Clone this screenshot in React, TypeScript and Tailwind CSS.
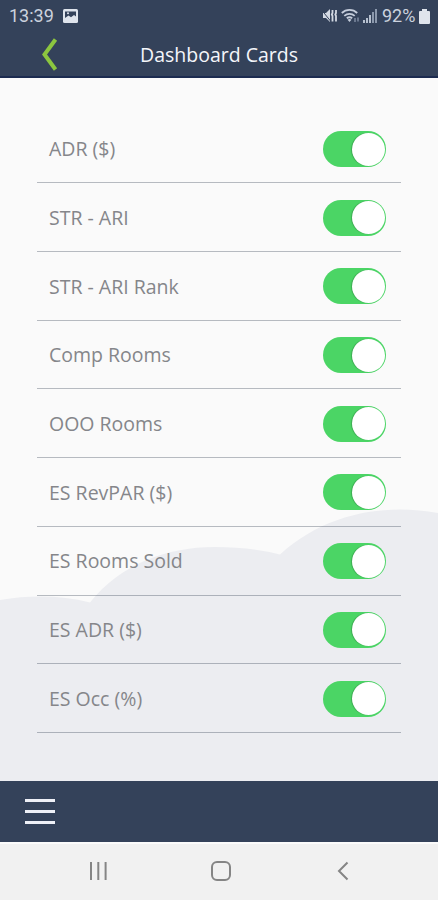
import { useState } from 'react'

const CARDS = [
  'ADR ($)',
  'STR - ARI',
  'STR - ARI Rank',
  'Comp Rooms',
  'OOO Rooms',
  'ES RevPAR ($)',
  'ES Rooms Sold',
  'ES ADR ($)',
  'ES Occ (%)',
]

function StatusBar() {
  return (
    <div className="h-8 flex items-center justify-between pl-[9px] pr-[8px] text-[#cbd2de] font-[Roboto,sans-serif] text-[18px] leading-none">
      <div className="flex items-center gap-[8px]">
        <span className="w-[46px] whitespace-nowrap">13:39</span>
        <svg width="15" height="14" viewBox="0 0 15 14">
          <rect width="15" height="14" rx="1.5" fill="#dfe4ec" />
          <path d="M2 2.5h11v5l-2-1.5-3 2.2-2.5-1.7L2 9z" fill="#34425a" />
          <circle cx="5" cy="4.3" r="1" fill="#dfe4ec" />
        </svg>
      </div>
      <div className="flex items-center">
        <svg width="16" height="16" viewBox="0 0 16 16" fill="none">
          <path d="M1 5h3l4-4v13l-4-4H1z" fill="#d3d9e3" />
          <path d="M0 2.5 8.5 13" stroke="#34425a" strokeWidth="1" />
          <path d="M10.5 2v3l-.7 1.5.7 1.5v5.5M14 2v3l-.7 1.5.7 1.5v5.5" stroke="#d3d9e3" strokeWidth="1.8" />
        </svg>
        <svg className="ml-[3px]" width="20" height="16" viewBox="0 0 20 16" fill="none" stroke="#c5cddb" strokeWidth="1.8">
          <path d="M.8 5C5 .8 12 .8 16.2 5M3.3 7.8c3-2.7 7.4-2.7 10.4 0M5.8 10.3c1.6-1.3 3.8-1.3 5.4 0" />
          <path d="m8.5 14-2-2.3c1.2-1 2.8-1 4 0z" fill="#c5cddb" stroke="none" />
          <path d="M14 10v4M17 9.5v4" stroke="#7d8ba1" strokeWidth="1.5" />
        </svg>
        <svg className="ml-[2px]" width="14" height="14" viewBox="0 0 14 14" fill="#b6c0cf">
          <path d="M0 11h2v3H0zM3 9h2v5H3zM6 6h2v8H6z" />
          <path d="M9 3h2v11H9zM12 0h2v14h-2z" fill="#8c99ad" />
        </svg>
        <span className="ml-[5px] w-[37px] whitespace-nowrap">92%</span>
        <svg width="11" height="15" viewBox="0 0 11 15" fill="#dfe4ec">
          <path d="M3 0h5v2h2a1 1 0 0 1 1 1v11a1 1 0 0 1-1 1H1a1 1 0 0 1-1-1V3a1 1 0 0 1 1-1h2z" />
        </svg>
      </div>
    </div>
  )
}

function Toggle({ on, label, onChange }: { on: boolean; label: string; onChange: () => void }) {
  return (
    <button
      role="switch"
      aria-checked={on}
      aria-label={label}
      onClick={onChange}
      className={`w-[63px] h-9 rounded-full p-px flex items-center ${on ? 'bg-[#4bd565] justify-end' : 'bg-gray-300 justify-start'}`}
    >
      <span className="size-[33px] rounded-full bg-white shadow-[-1px_0px_1px_rgba(0,0,0,0.2)]" />
    </button>
  )
}

export default function App() {
  const [off, setOff] = useState<string[]>([])

  function toggle(card: string) {
    setOff(o => (o.includes(card) ? o.filter(c => c !== card) : [...o, card]))
  }

  return (
    <div className="w-[438px] h-[900px] flex flex-col overflow-hidden bg-[#fafafa] font-['Open_Sans',sans-serif]">
      <header className="h-[78px] shrink-0 bg-[#34425a] border-b-2 border-[#1c2b50]">
        <StatusBar />
        <div className="h-11 grid grid-cols-[70px_1fr_70px] items-center">
          <button aria-label="Back" className="pl-[41px]">
            <svg width="17" height="33" viewBox="0 0 17 33" fill="none" stroke="#8cc63f" strokeWidth="4">
              <path d="M14.5 1.5 3.5 16.5l11 15" />
            </svg>
          </button>
          <h1 className="pt-px text-center text-[19.5px] leading-none text-[#f4f6fa]">Dashboard Cards</h1>
        </div>
      </header>

      <main className="relative flex-1 px-[37px] pt-[36.7px]">
        {/* cloud backdrop */}
        <svg className="absolute inset-0" width="438" height="703" viewBox="0 78 438 703">
          <path d="M0 600Q48 592 90 602.5C120 565 165 547 215 547Q250 547 280 554.5C325 513 385 503 438 513V781H0z" fill="#ecedf1" />
        </svg>
        <ul className="relative">
          {CARDS.map(card => (
            <li key={card} className="h-[68.7px] pt-px pl-3 pr-[15px] flex items-center justify-between border-b border-[#364152]/35">
              <span className="text-[19.5px] leading-none text-[#85868a]">{card}</span>
              <Toggle on={!off.includes(card)} label={card} onChange={() => toggle(card)} />
            </li>
          ))}
        </ul>
      </main>

      <footer className="h-[61px] shrink-0 bg-[#34425a] pl-[25px] flex items-center">
        <button aria-label="Menu" className="flex flex-col gap-2">
          <span className="w-[30px] h-[3px] bg-[#eef0f7]" />
          <span className="w-[30px] h-[3px] bg-[#eef0f7]" />
          <span className="w-[30px] h-[3px] bg-[#eef0f7]" />
        </button>
      </footer>

      <nav className="h-[58px] shrink-0 bg-[#f1f1f1] border-t-2 border-[#fbfbfb] pl-[89px] pb-[3px] flex items-center">
        <svg width="19" height="20" viewBox="0 0 19 20" fill="none" stroke="#858585" strokeWidth="2">
          <path d="M2 1v18M9.3 1v18M16.6 1v18" />
        </svg>
        <svg className="ml-[102px]" width="22" height="22" viewBox="0 0 22 22" fill="none" stroke="#858585" strokeWidth="2">
          <rect x="2" y="2" width="18" height="18" rx="5" />
        </svg>
        <svg className="ml-[105px]" width="12" height="20" viewBox="0 0 12 20" fill="none" stroke="#858585" strokeWidth="2">
          <path d="M10.5 1.5 2 10l8.5 8.5" />
        </svg>
      </nav>
    </div>
  )
}
